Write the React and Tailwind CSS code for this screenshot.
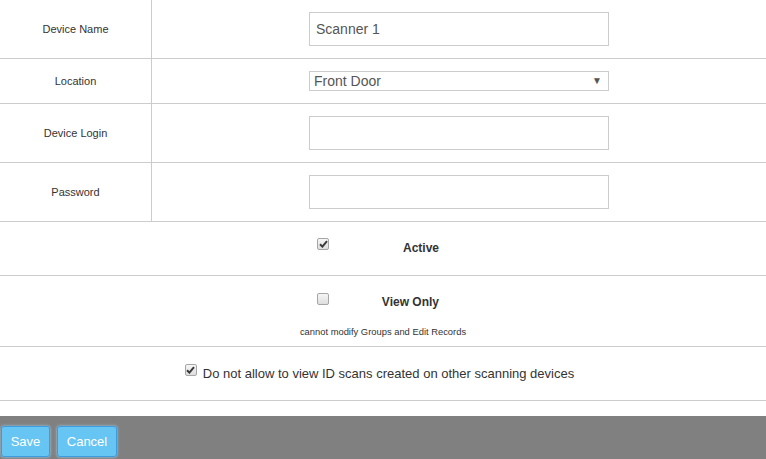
import React, { useState } from "react";

function Check({ checked, onChange }) {
  return (
    <button
      type="button"
      onClick={onChange}
      className="w-[12px] h-[12px] shrink-0 rounded-[2px] border border-[#a6a6a6] bg-gradient-to-b from-[#f6f6f6] to-[#dedede] flex items-center justify-center p-0"
    >
      {checked && (
        <svg width="9" height="8" viewBox="0 0 9 8">
          <path
            d="M1 4.2 L3.4 6.6 L8 1.2"
            fill="none"
            stroke="#3a3a3a"
            strokeWidth="2"
          />
        </svg>
      )}
    </button>
  );
}

function FieldRow({ label, height, children }) {
  return (
    <div className={`flex border-b border-[#cccccc] ${height}`}>
      <div className="w-[152px] border-r border-[#cccccc] flex items-center justify-center text-[11px] text-[#333]">
        {label}
      </div>
      <div className="flex-1 flex items-center justify-center">{children}</div>
    </div>
  );
}

export default function App() {
  const [form, setForm] = useState({
    name: "Scanner 1",
    location: "Front Door",
    login: "",
    password: "",
  });
  const [active, setActive] = useState(true);
  const [viewOnly, setViewOnly] = useState(false);
  const [restrict, setRestrict] = useState(true);

  const inputCls =
    "w-[300px] h-[34px] border border-[#cccccc] px-[6px] text-[14px] text-[#555] outline-none";

  return (
    <div className="w-[766px] h-[459px] bg-white flex flex-col font-['Liberation_Sans',Arial,sans-serif] overflow-hidden">
      <FieldRow label="Device Name" height="h-[59px]">
        <input
          className={inputCls}
          value={form.name}
          onChange={(e) => setForm((p) => ({ ...p, name: e.target.value }))}
        />
      </FieldRow>
      <FieldRow label="Location" height="h-[45px]">
        <div className="relative w-[300px] h-[20px] border border-[#cccccc] flex items-center pl-[4px] text-[14px] text-[#555]">
          {form.location}
          <span className="absolute right-[6px] top-[3px] text-[10px] leading-[12px] text-[#555]">▼</span>
        </div>
      </FieldRow>
      <FieldRow label="Device Login" height="h-[59px]">
        <input
          className={inputCls}
          value={form.login}
          onChange={(e) => setForm((p) => ({ ...p, login: e.target.value }))}
        />
      </FieldRow>
      <FieldRow label="Password" height="h-[59px]">
        <input
          type="password"
          className={inputCls}
          value={form.password}
          onChange={(e) => setForm((p) => ({ ...p, password: e.target.value }))}
        />
      </FieldRow>

      {/* Active */}
      <div className="h-[54px] border-b border-[#cccccc] pt-[16px]">
        <div className="w-[132px] mx-auto flex items-start">
          <Check checked={active} onChange={() => setActive(!active)} />
          <span className="flex-1 text-right pr-[10px] mt-[3px] text-[12px] leading-[14px] font-bold text-[#333]">
            Active
          </span>
        </div>
      </div>

      {/* View only */}
      <div className="h-[71px] border-b border-[#cccccc] pt-[17px] flex flex-col">
        <div className="w-[132px] mx-auto flex items-start">
          <Check checked={viewOnly} onChange={() => setViewOnly(!viewOnly)} />
          <span className="flex-1 text-right pr-[10px] mt-[2px] text-[12px] leading-[14px] font-bold text-[#333]">
            View Only
          </span>
        </div>
        <p className="mt-[17px] text-center text-[9.4px] leading-[11px] text-[#333]">
          cannot modify Groups and Edit Records
        </p>
      </div>

      {/* Restrict */}
      <div className="h-[54px] border-b border-[#cccccc] pt-[17px] pr-[7px] flex justify-center items-start">
        <Check checked={restrict} onChange={() => setRestrict(!restrict)} />
        <span className="ml-[6px] mt-[2px] text-[13px] leading-[15px] text-[#333]">
          Do not allow to view ID scans created on other scanning devices
        </span>
      </div>

      <div className="h-[15px]" />

      {/* Footer */}
      <div className="flex-1 bg-[#808080] flex items-start gap-[7px] pl-[1px] pt-[10px]">
        <button className="w-[49px] h-[31px] rounded-[3px] border border-[#3d9be0] bg-[#66c5f3] text-white text-[13px] shadow-[0_0_3px_#9fd3f5]">
          Save
        </button>
        <button className="w-[60px] h-[31px] rounded-[3px] border border-[#3d9be0] bg-[#66c5f3] text-white text-[13px] shadow-[0_0_3px_#9fd3f5]">
          Cancel
        </button>
      </div>
    </div>
  );
}
